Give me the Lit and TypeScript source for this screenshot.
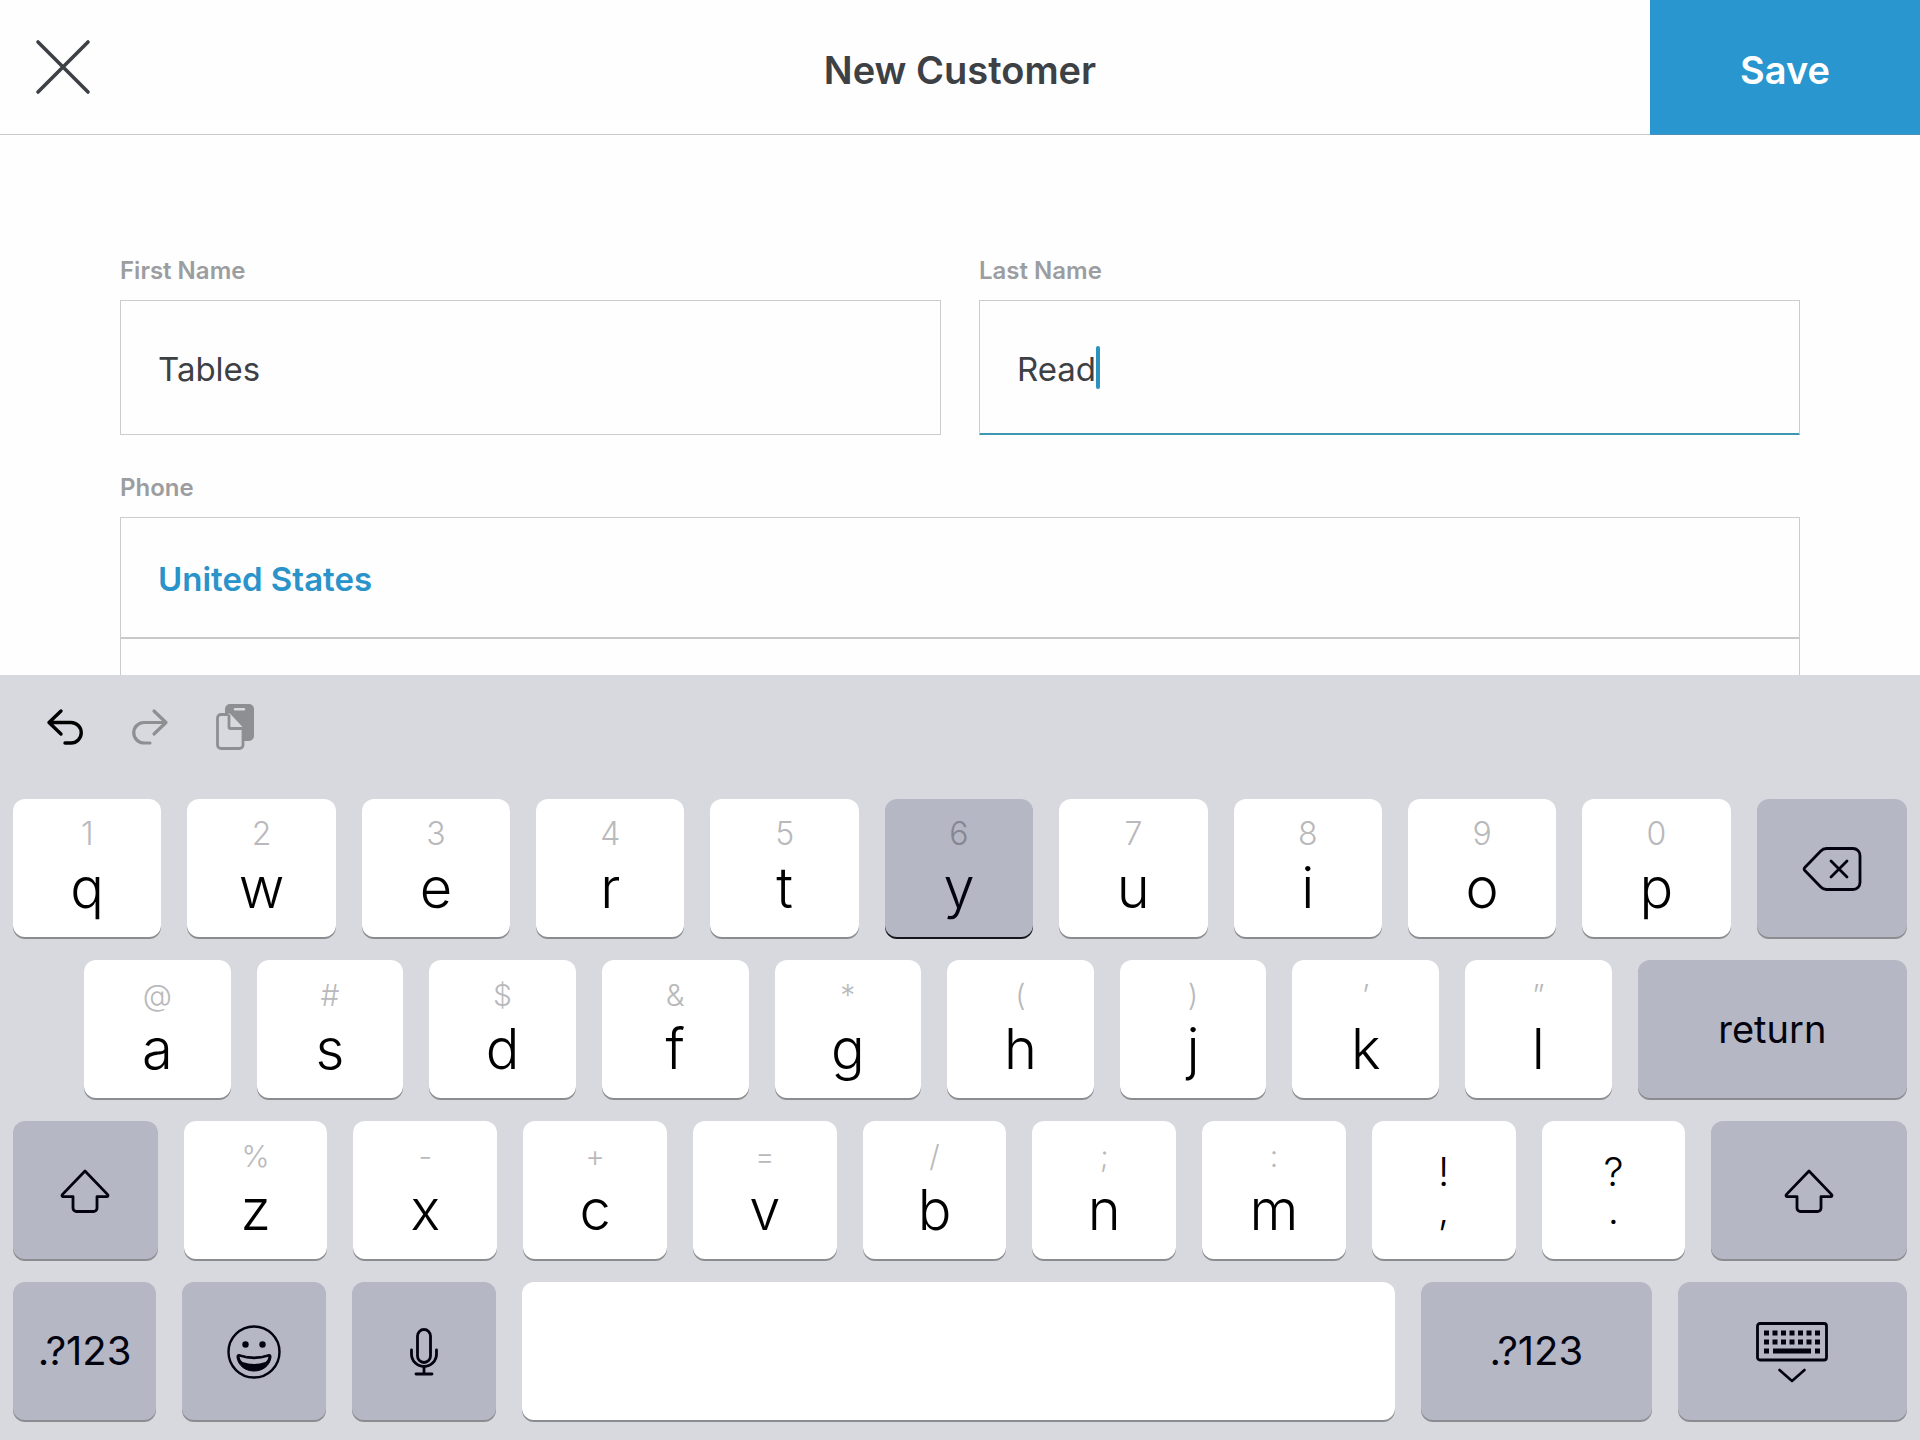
import { LitElement, html, svg, css, nothing, TemplateResult } from "lit";
import { customElement, property } from "lit/decorators.js";
import { classMap } from "lit/directives/class-map.js";

type KeyKind = "letter" | "dual" | "label" | "icon" | "space";

interface KeySpec {
  kind: KeyKind;
  main?: string;
  hint?: string;
  name?: string;
  icon?: string;
  pressed?: boolean;
}

const letters = (pairs: string[]): KeySpec[] =>
  pairs.map((pair) => ({ kind: "letter", hint: pair[0], main: pair[1], pressed: pair[1] === "y" }));

const ROWS: { layout: string; keys: KeySpec[] }[] = [
  {
    layout: "top",
    keys: [
      ...letters(["1q", "2w", "3e", "4r", "5t", "6y", "7u", "8i", "9o", "0p"]),
      { kind: "icon", icon: "backspace", name: "Delete" },
    ],
  },
  {
    layout: "home",
    keys: [
      ...letters(["@a", "#s", "$d", "&f", "*g", "(h", ")j", "’k", "”l"]),
      { kind: "label", main: "return" },
    ],
  },
  {
    layout: "lower",
    keys: [
      { kind: "icon", icon: "shift", name: "Shift" },
      ...letters(["%z", "-x", "+c", "=v", "/b", ";n", ":m"]),
      { kind: "dual", hint: "!", main: "," },
      { kind: "dual", hint: "?", main: "." },
      { kind: "icon", icon: "shift", name: "Shift" },
    ],
  },
  {
    layout: "bottom",
    keys: [
      { kind: "label", main: ".?123" },
      { kind: "icon", icon: "emoji", name: "Emoji" },
      { kind: "icon", icon: "mic", name: "Dictate" },
      { kind: "space", name: "Space" },
      { kind: "label", main: ".?123" },
      { kind: "icon", icon: "dismiss", name: "Hide keyboard" },
    ],
  },
];

const keyDots = [0, 1].map((row) =>
  [0, 1, 2, 3, 4, 5, 6].map((col) => svg`<rect x=${8 + col * 8.5} y=${8.5 + row * 9} width="5" height="5" />`)
);

const ICONS: Record<string, { w: number; h: number; body: TemplateResult<2> }> = {
  close: {
    w: 54,
    h: 54,
    body: svg`<path d="M2 2 52 52M52 2 2 52" fill="none" stroke="currentColor" stroke-width="3.6" stroke-linecap="round" />`,
  },
  undo: {
    w: 38,
    h: 38,
    body: svg`<path d="M15 3 3 14.500 15 26M3 14.500H25A10.200 10.200 0 0 1 25 35H19" fill="none" stroke="currentColor" stroke-width="3.400" stroke-linecap="round" stroke-linejoin="round" />`,
  },
  redo: {
    w: 38,
    h: 38,
    body: svg`<path d="M23 3 35 14.500 23 26M35 14.500H13A10.200 10.200 0 0 0 13 35H19" fill="none" stroke="currentColor" stroke-width="3.200" stroke-linecap="round" stroke-linejoin="round" />`,
  },
  paste: {
    w: 38,
    h: 46,
    body: svg`
      <path fill="currentColor" fill-rule="evenodd" d="M14 0H33A5 5 0 0 1 38 5V32A5 5 0 0 1 33 37H28V24L15 9.500H9V5A5 5 0 0 1 14 0ZM19 4A1.300 1.300 0 0 0 19 6.600H28A1.300 1.300 0 0 0 28 4Z" />
      <path d="M12.500 10.500H5A3.500 3.500 0 0 0 1.500 14V41A3.500 3.500 0 0 0 5 44.500H23.500A3.500 3.500 0 0 0 27 41V24.500H14.500A1.500 1.500 0 0 1 13 23V10.500" fill="none" stroke="currentColor" stroke-width="2.800" stroke-linejoin="round" />
      <path d="M13.500 9 28.500 25V19L19 9Z" fill="currentColor" />`,
  },
  backspace: {
    w: 60,
    h: 46,
    body: svg`<path d="M24.500 2.500H51A7 7 0 0 1 58 9.500V36.500A7 7 0 0 1 51 43.500H24.500A8 8 0 0 1 18.800 41L2.800 24.600A2.200 2.200 0 0 1 2.800 21.400L18.800 5A8 8 0 0 1 24.500 2.500ZM29 15 45 31M45 15 29 31" fill="none" stroke="currentColor" stroke-width="2.800" stroke-linecap="round" stroke-linejoin="round" />`,
  },
  shift: {
    w: 50,
    h: 44,
    body: svg`<path d="M25 2 47.700 25.600A1.200 1.200 0 0 1 47 27.600H37V39A3.500 3.500 0 0 1 33.500 42.500H16.500A3.500 3.500 0 0 1 13 39V27.600H3A1.200 1.200 0 0 1 2.300 25.600Z" fill="none" stroke="currentColor" stroke-width="2.800" stroke-linejoin="round" />`,
  },
  emoji: {
    w: 54,
    h: 54,
    body: svg`
      <circle cx="27" cy="27" r="25.500" fill="none" stroke="currentColor" stroke-width="2.400" />
      <circle cx="18.500" cy="19.500" r="3.200" fill="currentColor" />
      <circle cx="35.500" cy="19.500" r="3.200" fill="currentColor" />
      <path d="M12 29.500Q27 34.500 42 29.500Q44.500 29 44 32.500C42.500 41 35.500 46 27 46S11.500 41 10 32.500Q9.500 29 12 29.500Z" fill="currentColor" stroke="currentColor" stroke-width="1" stroke-linejoin="round" />
      <path d="M12.500 31.800Q27 36.500 41.500 31.800Q41 35.500 38.500 37Q27 41 15.500 37Q13 35.500 12.500 31.800Z" fill="#b5b7c4" />`,
  },
  mic: {
    w: 28,
    h: 48,
    body: svg`
      <rect x="7.500" y="1.500" width="13" height="33" rx="6.500" fill="none" stroke="currentColor" stroke-width="2.800" />
      <path d="M1.500 22V26A12.500 12.500 0 0 0 26.500 26V22M14 38.500V46M6 46H22" fill="none" stroke="currentColor" stroke-width="2.800" stroke-linecap="round" />`,
  },
  dismiss: {
    w: 72,
    h: 60,
    body: svg`
      <rect x="1.500" y="1.500" width="69" height="36.500" rx="2.500" fill="none" stroke="currentColor" stroke-width="2.800" />
      <g fill="currentColor">${keyDots}
        <rect x="8" y="26.500" width="5" height="5" /><rect x="17" y="26.500" width="38" height="5" /><rect x="59" y="26.500" width="5" height="5" />
      </g>
      <path d="M23.500 48 36 59 48.500 48" fill="none" stroke="currentColor" stroke-width="2.600" stroke-linecap="round" stroke-linejoin="round" />`,
  },
};

const icon = (id: string) => {
  const { w, h, body } = ICONS[id];
  return html`<svg width=${w} height=${h} viewBox="0 0 ${w} ${h}" overflow="visible" aria-hidden="true">${body}</svg>`;
};

@customElement("key-cap")
export class KeyCap extends LitElement {
  @property({ attribute: false }) spec!: KeySpec;

  static styles = css`
    :host {
      display: block;
      min-width: 0;
    }
    .key {
      display: flex;
      flex-direction: column;
      align-items: center;
      width: 100%;
      height: 138px;
      padding: 0;
      border: 0;
      border-radius: 12px;
      background: #fff;
      box-shadow: 0 2px 0 #8b8c90;
      color: #000;
      font-family: Inter, "Liberation Sans", sans-serif;
      font-size: 40px;
      line-height: 38px;
    }
    .letter {
      padding-top: 15px;
      gap: 4px;
    }
    .letter .hint {
      color: #b9b9bc;
      font-size: 30px;
      font-weight: 300;
      line-height: 40px;
    }
    .digit .hint {
      font-size: 32px;
    }
    .letter .main {
      font-size: 56px;
      font-weight: 350;
      line-height: 60px;
    }
    .dual {
      padding-top: 32px;
      font-weight: 350;
    }
    .label,
    .icon {
      justify-content: center;
    }
    .icon {
      padding-top: 2px;
    }
    .word {
      font-size: 38px;
    }
    .label,
    .icon,
    .pressed {
      background: #b5b7c4;
      color: #02030f;
    }
    .pressed {
      box-shadow: 0 2px 0 #14141c;
    }
    .pressed .hint {
      color: #858692;
    }
    svg {
      display: block;
    }
  `;

  render() {
    const { kind, main, hint, name, icon: iconId, pressed } = this.spec;
    return html`<button
      type="button"
      class=${classMap({
        key: true,
        [kind]: true,
        digit: /\d/.test(hint ?? ""),
        word: kind === "label" && /^[a-z]+$/.test(main ?? ""),
        pressed: !!pressed,
      })}
      aria-label=${name ?? nothing}
    >
      ${hint ? html`<span class="hint">${hint}</span>` : nothing}
      ${main ? html`<span class="main">${main}</span>` : nothing}
      ${iconId ? icon(iconId) : nothing}
    </button>`;
  }
}

@customElement("touch-keyboard")
export class TouchKeyboard extends LitElement {
  static styles = css`
    :host {
      display: block;
      padding: 0 13px 20px;
      background: #d8d9de;
    }
    .tools {
      display: flex;
      align-items: center;
      gap: 47px;
      box-sizing: border-box;
      height: 124px;
      padding: 0 33px 20px;
    }
    .tool {
      display: flex;
      padding: 0;
      border: 0;
      background: none;
      color: #000;
    }
    .tool:disabled {
      color: #8e8f93;
    }
    .rows {
      display: grid;
      gap: 23px;
    }
    .row {
      display: grid;
      gap: 26px;
    }
    .top {
      grid-template-columns: repeat(10, 148fr) 150fr;
    }
    .home {
      grid-template-columns: repeat(9, 147fr) 270fr;
      padding-left: 71px;
    }
    .lower {
      grid-template-columns: 145fr repeat(9, 144fr) 196fr;
    }
    .bottom {
      grid-template-columns: 143fr 144fr 144fr 872fr 231fr 229fr;
    }
  `;

  render() {
    return html`
      <div class="tools">
        <button class="tool" type="button" aria-label="Undo">${icon("undo")}</button>
        <button class="tool" type="button" aria-label="Redo" disabled>${icon("redo")}</button>
        <button class="tool" type="button" aria-label="Paste" disabled>${icon("paste")}</button>
      </div>
      <div class="rows">
        ${ROWS.map(
          (row) => html`<div class="row ${row.layout}">
            ${row.keys.map((spec) => html`<key-cap .spec=${spec}></key-cap>`)}
          </div>`
        )}
      </div>
    `;
  }
}

@customElement("app-root")
export class AppRoot extends LitElement {
  static styles = css`
    :host {
      display: flex;
      flex-direction: column;
      height: 100vh;
      overflow: hidden;
      background: #fefefe;
      color: #3d4045;
      font-family: Inter, "Liberation Sans", sans-serif;
    }
    .bar {
      display: grid;
      grid-template-columns: 1fr auto 1fr;
      align-items: center;
      flex: none;
      min-height: 134px;
      border-bottom: 1px solid #c9cacc;
    }
    .close {
      display: flex;
      justify-self: start;
      padding: 0 36px;
      border: 0;
      background: none;
      color: #3d4045;
    }
    .title {
      margin: 0;
      padding-top: 6px;
      font-size: 38px;
      font-weight: 600;
      line-height: 48px;
    }
    .save {
      align-self: stretch;
      justify-self: end;
      width: 270px;
      margin-bottom: -1px;
      padding: 6px 0 0;
      border: 0;
      border-bottom: 1px solid #4d8fb8;
      background: #2996cf;
      color: #fff;
      font: inherit;
      font-size: 38px;
      font-weight: 600;
      line-height: 48px;
    }
    .form {
      display: grid;
      grid-template-columns: 1fr 1fr;
      align-content: start;
      gap: 37px 38px;
      flex: 1;
      min-height: 0;
      overflow: hidden;
      padding: 120px 120px 0;
    }
    .field {
      display: grid;
      gap: 13px;
    }
    .wide {
      grid-column: 1 / -1;
    }
    .caption {
      color: #9b9da0;
      font-size: 24px;
      font-weight: 600;
      line-height: 32px;
    }
    .box {
      display: flex;
      align-items: center;
      box-sizing: border-box;
      height: 135px;
      padding: 0 37px;
      border: 1px solid #cbccce;
    }
    .active {
      border-bottom-color: #3f98b2;
      box-shadow: inset 0 -1px 0 #3f98b2;
    }
    .text {
      flex: 1;
      min-width: 0;
      padding: 2px 0 0;
      border: 0;
      outline: 0;
      background: none;
      color: inherit;
      font: inherit;
      font-size: 33px;
      line-height: 44px;
    }
    .active .text {
      flex: none;
      field-sizing: content;
      caret-color: transparent;
    }
    .caret {
      width: 4px;
      height: 43px;
      border-radius: 2px;
      background: #2b93bd;
    }
    .stack {
      border: 1px solid #cbccce;
    }
    .country {
      display: block;
      width: 100%;
      height: 121px;
      padding: 2px 37px 0;
      border: 0;
      border-bottom: 2px solid #c8c9cb;
      background: none;
      color: #2a93c9;
      font: inherit;
      font-size: 33px;
      font-weight: 600;
      line-height: 44px;
      text-align: left;
    }
    .number {
      display: block;
      box-sizing: border-box;
      width: 100%;
      height: 121px;
      padding: 0 37px;
    }
    svg {
      display: block;
    }
  `;

  render() {
    return html`
      <header class="bar">
        <button class="close" type="button" aria-label="Close">${icon("close")}</button>
        <h1 class="title">New Customer</h1>
        <button class="save" type="submit" form="customer">Save</button>
      </header>
      <form class="form" id="customer">
        <div class="field">
          <label class="caption" for="first">First Name</label>
          <div class="box"><input class="text" id="first" type="text" value="Tables" /></div>
        </div>
        <div class="field">
          <label class="caption" for="last">Last Name</label>
          <div class="box active"><input class="text" id="last" type="text" value="Read" /><span class="caret"></span></div>
        </div>
        <div class="field wide">
          <label class="caption" for="phone">Phone</label>
          <div class="stack">
            <button class="country" type="button">United States</button>
            <input class="text number" id="phone" type="tel" />
          </div>
        </div>
      </form>
      <touch-keyboard></touch-keyboard>
    `;
  }
}
